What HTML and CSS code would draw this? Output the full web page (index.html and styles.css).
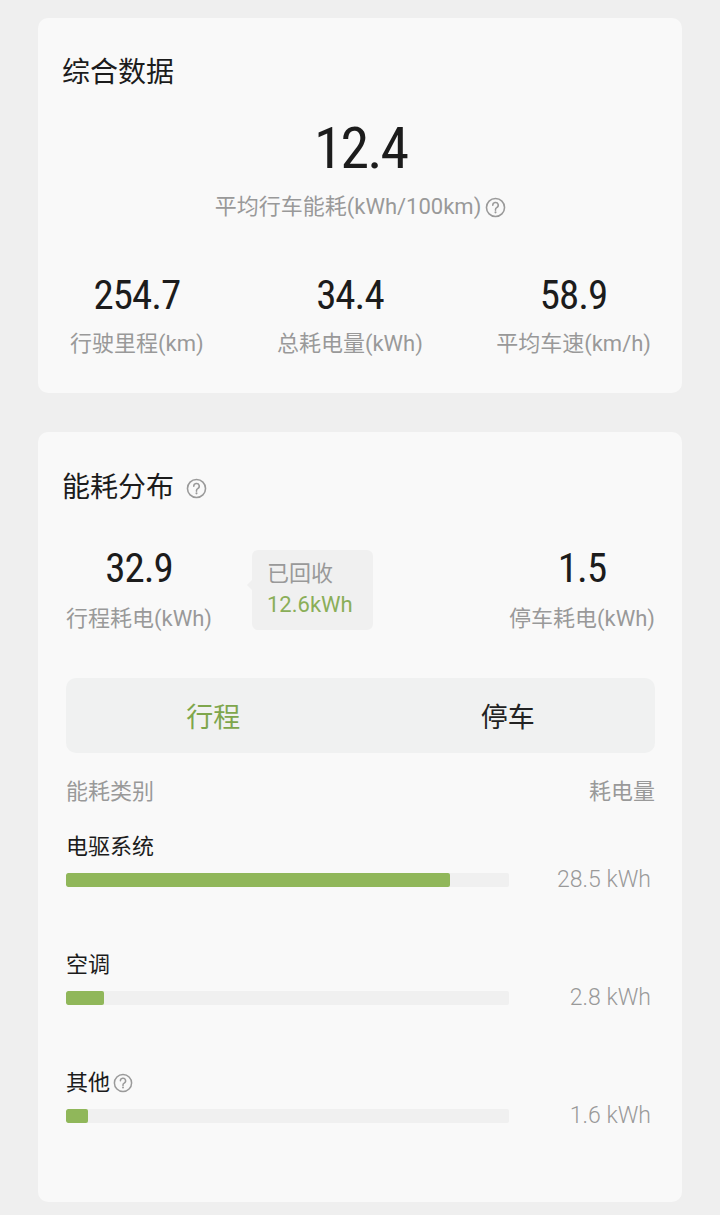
FILE: index.html
```html
<!DOCTYPE html>
<html lang="zh-CN">
<head>
    <meta charset="UTF-8">
    <meta name="viewport" content="width=device-width, initial-scale=1.0">
    <title>能耗数据</title>
    <link rel="stylesheet" href="styles.css">
</head>
<body>
    <!-- 综合数据 -->
    <div class="card card-summary">
        <h2 class="card-title">综合数据</h2>

        <div class="main-stat">
            <div class="main-value num">12.4</div>
            <div class="main-label">
                平均行车能耗(kWh/100km)
                <svg class="help" viewBox="0 0 20 20"><circle cx="10" cy="10" r="8.6"/><path d="M7.4 7.8a2.6 2.6 0 1 1 3.8 2.3c-.8.4-1.2.9-1.2 1.7v.8"/><circle class="dot" cx="10" cy="14.6" r="1"/></svg>
            </div>
        </div>

        <div class="stats">
            <div class="stat">
                <div class="stat-value num">254.7</div>
                <div class="stat-label">行驶里程(km)</div>
            </div>
            <div class="stat">
                <div class="stat-value num">34.4</div>
                <div class="stat-label">总耗电量(kWh)</div>
            </div>
            <div class="stat">
                <div class="stat-value num">58.9</div>
                <div class="stat-label">平均车速(km/h)</div>
            </div>
        </div>
    </div>

    <!-- 能耗分布 -->
    <div class="card card-dist">
        <h2 class="card-title">
            能耗分布
            <svg class="help help-title" viewBox="0 0 20 20"><circle cx="10" cy="10" r="8.6"/><path d="M7.4 7.8a2.6 2.6 0 1 1 3.8 2.3c-.8.4-1.2.9-1.2 1.7v.8"/><circle class="dot" cx="10" cy="14.6" r="1"/></svg>
        </h2>

        <div class="split">
            <div class="stat">
                <div class="stat-value num">32.9</div>
                <div class="stat-label">行程耗电(kWh)</div>
            </div>
            <div class="recovered">
                <div class="recovered-label">已回收</div>
                <div class="recovered-value">12.6kWh</div>
            </div>
            <div class="stat stat-right">
                <div class="stat-value num">1.5</div>
                <div class="stat-label">停车耗电(kWh)</div>
            </div>
        </div>

        <div class="tabs">
            <div class="tab active">行程</div>
            <div class="tab">停车</div>
        </div>

        <div class="list-head">
            <span>能耗类别</span>
            <span>耗电量</span>
        </div>

        <div class="item">
            <div class="item-name">电驱系统</div>
            <div class="item-row">
                <div class="track"><div class="fill" style="width: 86.6%"></div></div>
                <div class="item-value">28.5 kWh</div>
            </div>
        </div>

        <div class="item">
            <div class="item-name">空调</div>
            <div class="item-row">
                <div class="track"><div class="fill" style="width: 8.5%"></div></div>
                <div class="item-value">2.8 kWh</div>
            </div>
        </div>

        <div class="item">
            <div class="item-name">
                其他
                <svg class="help help-item" viewBox="0 0 20 20"><circle cx="10" cy="10" r="8.6"/><path d="M7.4 7.8a2.6 2.6 0 1 1 3.8 2.3c-.8.4-1.2.9-1.2 1.7v.8"/><circle class="dot" cx="10" cy="14.6" r="1"/></svg>
            </div>
            <div class="item-row">
                <div class="track"><div class="fill" style="width: 5%"></div></div>
                <div class="item-value">1.6 kWh</div>
            </div>
        </div>
    </div>
</body>
</html>
```

FILE: styles.css
```css
body {
    font-family: Roboto, "Noto Sans CJK SC", sans-serif;
    background-color: #efefef;
    color: #1c1c1c;
    margin: 0;
    padding: 18px 38px 12px;
}

.card {
    background-color: #f9f9f9;
    border-radius: 10px;
    padding: 39px 27px 35px 28px;
}

.card-dist {
    margin-top: 39px;
    padding-top: 40px;
    padding-bottom: 79px;
}

.card-title {
    display: flex;
    align-items: center;
    margin: 0 0 0 -4px;
    font-size: 28px;
    font-weight: 400;
    line-height: 32px;
}

.num {
    font-weight: 450;
    letter-spacing: -1px;
    font-stretch: 75%;
}

.help {
    width: 21px;
    height: 21px;
    margin-left: 4px;
    fill: none;
    stroke: #9a9a9a;
    stroke-width: 1.5;
    stroke-linecap: round;
}

.help .dot {
    fill: #9a9a9a;
    stroke: none;
}

.help-title {
    margin-left: 12px;
}

.help-item {
    width: 20px;
    height: 20px;
    margin-left: 3px;
}

/* 综合数据 */
.main-stat {
    text-align: center;
}

.main-value {
    margin-top: 29px;
    font-size: 58px;
    line-height: 60px;
    letter-spacing: -2px;
}

.main-label {
    display: flex;
    align-items: center;
    justify-content: center;
    margin-top: 15px;
    font-size: 22px;
    line-height: 28px;
    color: #999;
}

.stats {
    display: flex;
    justify-content: space-between;
    margin-top: 52px;
    padding: 0 4px;
}

.stat {
    text-align: center;
}

.stat-value {
    font-size: 41px;
    line-height: 44px;
}

.stat-label {
    margin-top: 13px;
    font-size: 22px;
    line-height: 28px;
    color: #999;
}

/* 能耗分布 */
.split {
    display: flex;
    align-items: center;
    margin-top: 42px;
}

.split .stat-label {
    margin-top: 15px;
}

.stat-right {
    margin-left: auto;
}

.recovered {
    position: relative;
    margin-left: 40px;
    padding: 8px 20px 10px 15px;
    background-color: #f0f0f0;
    border-radius: 6px;
    font-size: 22px;
    line-height: 31px;
}

.recovered::before {
    content: "";
    position: absolute;
    left: -5px;
    top: 30px;
    border-top: 5px solid transparent;
    border-bottom: 5px solid transparent;
    border-right: 5px solid #f0f0f0;
}

.recovered-label {
    color: #999;
}

.recovered-value {
    color: #8aae58;
}

.tabs {
    display: flex;
    height: 75px;
    margin-top: 45px;
    background-color: #f0f1f1;
    border-radius: 10px;
}

.tab {
    flex: 1;
    display: flex;
    align-items: center;
    justify-content: center;
    font-size: 27px;
    color: #222;
}

.tab.active {
    color: #7ea64c;
}

.list-head {
    display: flex;
    justify-content: space-between;
    margin-top: 25px;
    font-size: 22px;
    line-height: 28px;
    color: #999;
}

.item {
    margin-top: 64px;
}

.list-head + .item {
    margin-top: 27px;
}

.item-name {
    display: flex;
    align-items: center;
    font-size: 22px;
    line-height: 28px;
    color: #1c1c1c;
}

.item-row {
    display: grid;
    grid-template-columns: 443px 1fr;
    align-items: center;
    margin-top: 12px;
}

.track {
    height: 14px;
    background-color: #f0f0f0;
    border-radius: 2px;
    overflow: hidden;
}

.fill {
    height: 100%;
    background-color: #90b75a;
    border-radius: 2px;
}

.item-value {
    text-align: right;
    padding-right: 4px;
    font-size: 23px;
    font-weight: 300;
    line-height: 14px;
    color: #999;
}
```
